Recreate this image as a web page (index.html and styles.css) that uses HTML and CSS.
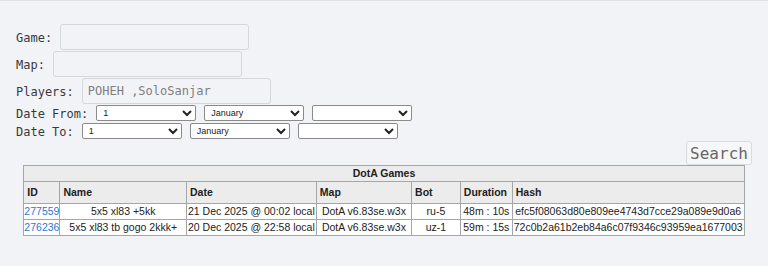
FILE: index.html
```html
<!DOCTYPE html>
<html lang="en">

<head>
    <meta charset="UTF-8">
    <meta name="viewport" content="width=device-width, initial-scale=1.0">
    <title>DotA Games</title>
    <link rel="stylesheet" href="styles.css">
</head>

<body>
    <form class="search-form">
        <!-- filtros -->
        <div class="row">
            <label for="game">Game:</label>
            <input type="text" id="game" class="field">
        </div>
        <div class="row">
            <label for="map">Map:</label>
            <input type="text" id="map" class="field">
        </div>
        <div class="row">
            <label for="players">Players:</label>
            <input type="text" id="players" class="field" value="POHEH ,SoloSanjar">
        </div>
        <div class="row row-date">
            <label>Date From:</label>
            <select class="date-sel"><option>1</option></select>
            <select class="date-sel"><option>January</option></select>
            <select class="date-sel"><option></option></select>
        </div>
        <div class="row row-date">
            <label>Date To:</label>
            <select class="date-sel"><option>1</option></select>
            <select class="date-sel"><option>January</option></select>
            <select class="date-sel"><option></option></select>
        </div>
        <div class="actions">
            <button type="button" class="search-btn">Search</button>
        </div>
    </form>

    <!-- tabla de partidas -->
    <table class="games">
        <colgroup>
            <col class="c-id">
            <col class="c-name">
            <col class="c-date">
            <col class="c-map">
            <col class="c-bot">
            <col class="c-dur">
            <col>
        </colgroup>
        <tr class="title">
            <th colspan="7">DotA Games</th>
        </tr>
        <tr class="head">
            <th>ID</th>
            <th>Name</th>
            <th>Date</th>
            <th>Map</th>
            <th>Bot</th>
            <th>Duration</th>
            <th>Hash</th>
        </tr>
        <tr>
            <td class="id"><a href="#">277559</a></td>
            <td>5x5 xl83 +5kk</td>
            <td>21 Dec 2025 @ 00:02 local</td>
            <td>DotA v6.83se.w3x</td>
            <td>ru-5</td>
            <td>48m : 10s</td>
            <td>efc5f08063d80e809ee4743d7cce29a089e9d0a6</td>
        </tr>
        <tr>
            <td class="id"><a href="#">276236</a></td>
            <td>5x5 xl83 tb gogo 2kkk+</td>
            <td>20 Dec 2025 @ 22:58 local</td>
            <td>DotA v6.83se.w3x</td>
            <td>uz-1</td>
            <td>59m : 15s</td>
            <td>72c0b2a61b2eb84a6c07f9346c93959ea1677003</td>
        </tr>
    </table>
</body>

</html>
```

FILE: styles.css
```css
body {
    margin: 0;
    padding: 23px 16px 0;
    border-top: 1px solid #e0e1e6;
    background-color: #f2f3f7;
    font-family: "DejaVu Sans Mono", monospace;
    font-size: 12px;
    color: #3a3a3a;
}

.row {
    display: flex;
    align-items: center;
    height: 27px;
}

.row label {
    margin-right: 8px;
}

.field {
    box-sizing: border-box;
    width: 189px;
    height: 26px;
    margin: 0 0 1px;
    padding: 0 5px;
    border: 1px solid #d5d7dd;
    border-radius: 3px;
    background-color: #f2f3f7;
    font-family: "DejaVu Sans Mono", monospace;
    font-size: 12px;
    color: #808080;
}

.row-date {
    height: 18px;
}

.date-sel {
    box-sizing: border-box;
    width: 100px;
    height: 16px;
    margin: 0 8px 2px 0;
    padding: 0 2px;
    border: 1px solid #8a8a8a;
    border-radius: 2px;
    background-color: #fff;
    font-family: "Liberation Sans", Arial, sans-serif;
    font-size: 9px;
    color: #222;
}

.actions {
    text-align: right;
    height: 24px;
}

.search-btn {
    box-sizing: border-box;
    width: 66px;
    height: 24px;
    padding: 0;
    border: 1px solid #dadbe0;
    border-radius: 3px;
    background-color: #f6f7f9;
    font-family: "DejaVu Sans Mono", monospace;
    font-size: 16px;
    color: #666;
}

/* tabla */
.games {
    width: 98%;
    margin: 0 auto;
    border-collapse: collapse;
    border: 1px solid #a6a6a6;
    font-family: "Liberation Sans", Arial, sans-serif;
    font-size: 10.5px;
    color: #222;
}

.c-id { width: 35px; }
.c-name { width: 128px; }
.c-date { width: 126px; }
.c-map { width: 96px; }
.c-bot { width: 51px; }
.c-dur { width: 52px; }

.games th,
.games td {
    border: 1px solid #a6a6a6;
    padding: 0 1px;
    white-space: nowrap;
}

.games .title th {
    background-color: #ececec;
    text-align: center;
    line-height: 15px;
}

.games .head th {
    background-color: #ececec;
    text-align: left;
    padding: 0 3px;
    line-height: 21px;
}

.games td {
    background-color: #fff;
    text-align: center;
    line-height: 15px;
}

.games td.id {
    text-align: left;
    padding: 0;
}

.games a {
    color: #2a78d6;
    text-decoration: none;
}
```
